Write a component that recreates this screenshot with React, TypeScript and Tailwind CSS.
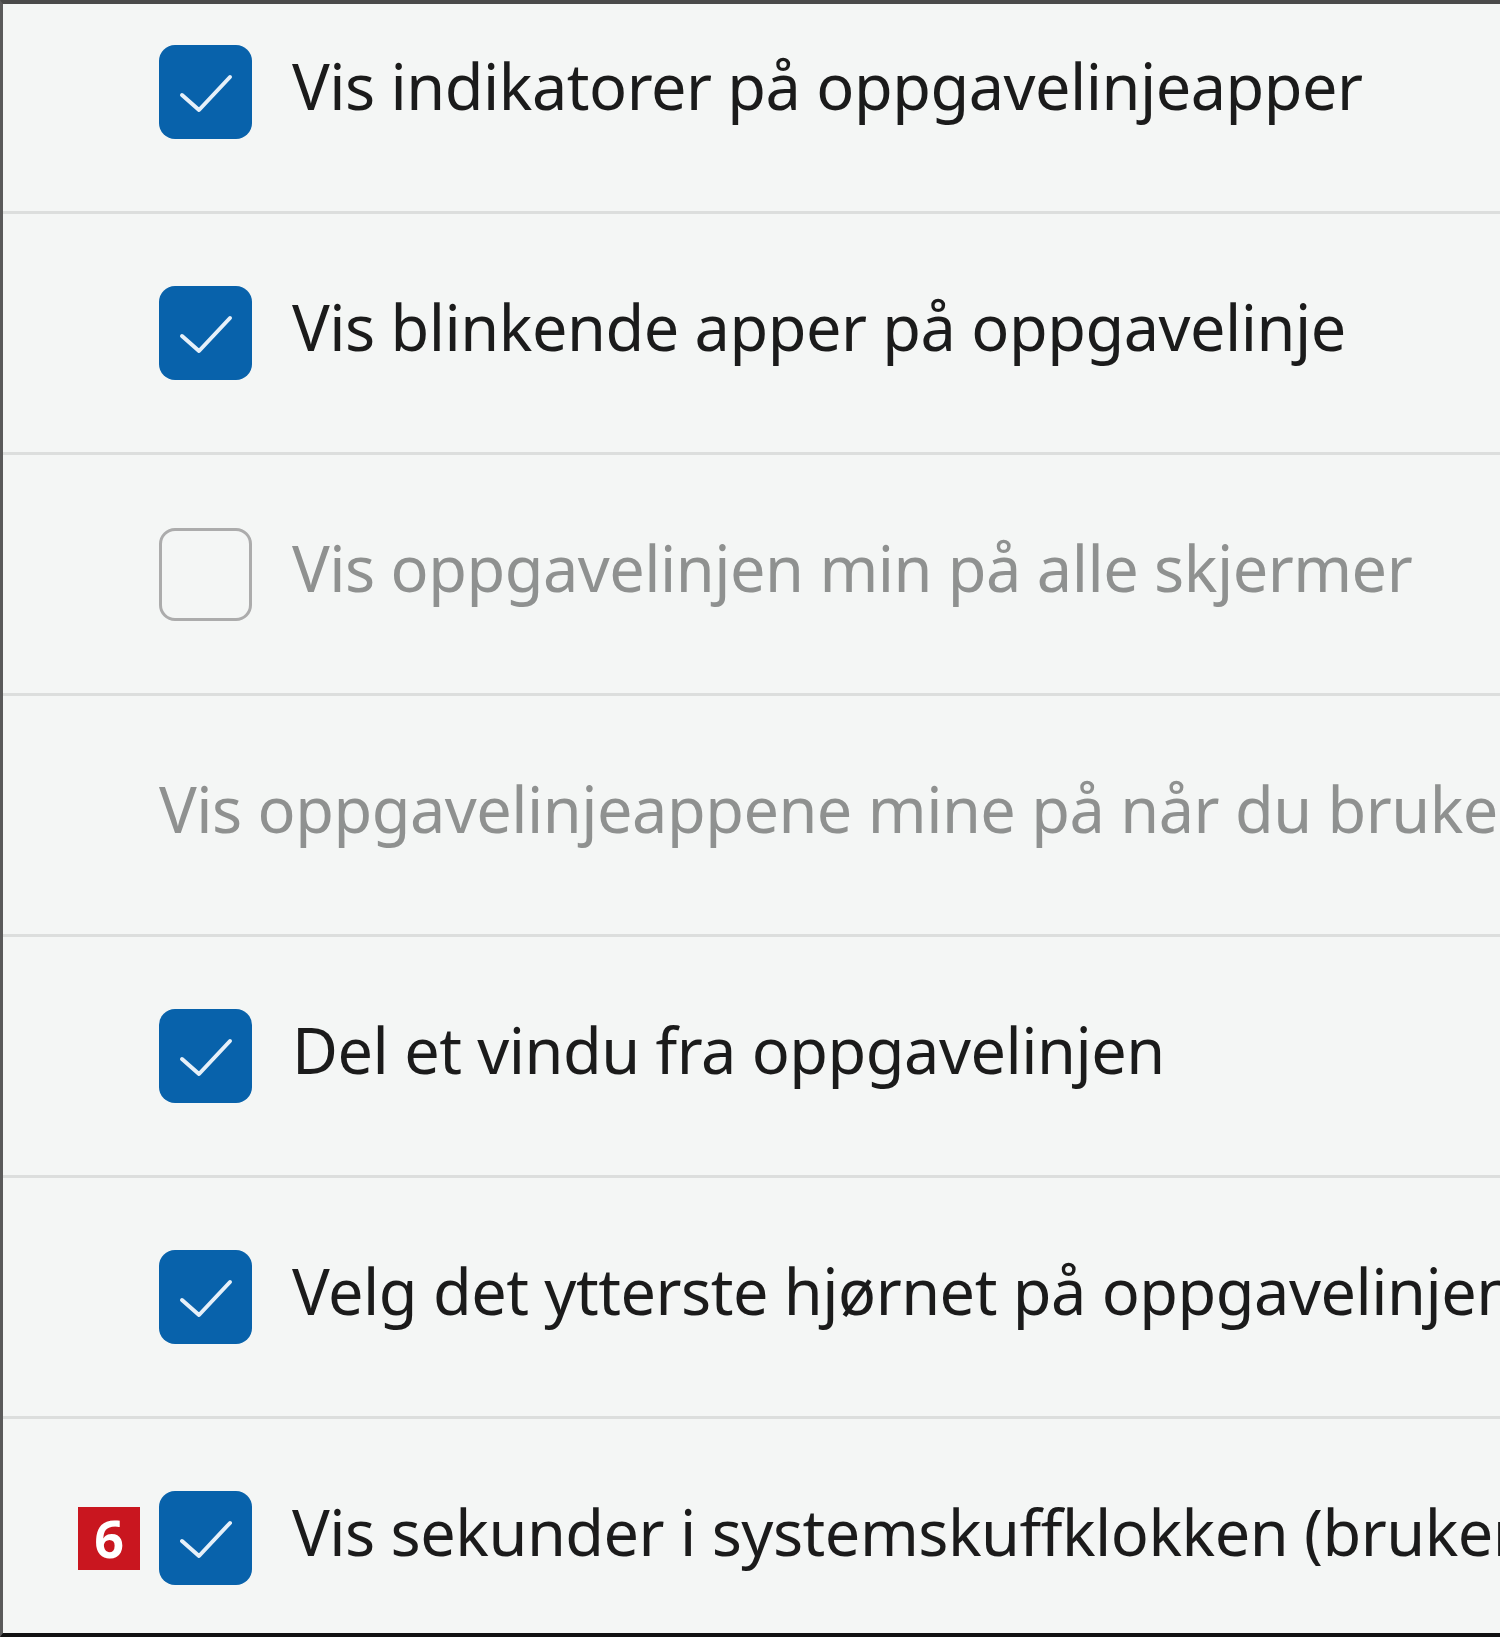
import { Fragment } from "react"

interface Option {
  label: string
  checked?: boolean
  disabled?: boolean
  noBox?: boolean
  badge?: string
}

const options: Option[] = [
  { label: "Vis indikatorer på oppgavelinjeapper", checked: true },
  { label: "Vis blinkende apper på oppgavelinje", checked: true },
  { label: "Vis oppgavelinjen min på alle skjermer", disabled: true },
  { label: "Vis oppgavelinjeappene mine på når du bruker", disabled: true, noBox: true },
  { label: "Del et vindu fra oppgavelinjen", checked: true },
  { label: "Velg det ytterste hjørnet på oppgavelinjen", checked: true },
  { label: "Vis sekunder i systemskuffklokken (bruker", checked: true, badge: "6" },
]

function Checkbox({ checked, disabled }: { checked?: boolean; disabled?: boolean }) {
  if (checked) {
    return (
      <div className="w-[93px] h-[94px] shrink-0 rounded-[16px] bg-[#0862ab] flex items-center justify-center">
        <svg width="93" height="94" viewBox="0 0 93 94" fill="none">
          <path
            d="M23 50 L40 65 L71 32"
            stroke="#e6f0f9"
            strokeWidth="4"
            strokeLinecap="round"
            strokeLinejoin="round"
          />
        </svg>
      </div>
    )
  }
  return (
    <div
      className={
        disabled
          ? "w-[93px] h-[93px] shrink-0 rounded-[16px] border-[3px] border-[#acacac]"
          : "w-[93px] h-[93px] shrink-0 rounded-[16px] border-[3px] border-[#555]"
      }
    />
  )
}

export default function App() {
  return (
    <div
      className="w-[1500px] h-[1637px] overflow-hidden bg-[#f4f6f5] border-t-4 border-t-[#4a4a4a] border-l-[3px] border-l-[#5a5a5a] border-b-4 border-b-[#111]"
      style={{ fontFamily: '"Noto Sans", "Open Sans", sans-serif' }}
    >
      <div className="-mt-[31px] flex flex-col">
        {options.map((opt) => (
          <div
            key={opt.label}
            className="h-[241px] shrink-0 flex items-center border-b-[3px] border-[#dcdedd] whitespace-nowrap"
          >
            <div className="w-[156px] shrink-0 flex justify-end pr-[19px]">
              {opt.badge && (
                <div className="w-[62px] h-[63px] bg-[#c9161f] text-white font-bold text-[52px] leading-none flex items-center justify-center">
                  {opt.badge}
                </div>
              )}
            </div>
            {opt.noBox ? (
              <span className="mb-[12px] text-[63px] text-[#8f9190] tracking-[-0.5px]">{opt.label}</span>
            ) : (
              <Fragment>
                <Checkbox checked={opt.checked} disabled={opt.disabled} />
                <span
                  className={
                    opt.disabled
                      ? "ml-[40px] mb-[12px] text-[63px] text-[#8f9190] tracking-[-0.5px]"
                      : "ml-[40px] mb-[12px] text-[63px] text-[#1b1b1b] tracking-[-0.5px]"
                  }
                >
                  {opt.label}
                </span>
              </Fragment>
            )}
          </div>
        ))}
      </div>
    </div>
  )
}
